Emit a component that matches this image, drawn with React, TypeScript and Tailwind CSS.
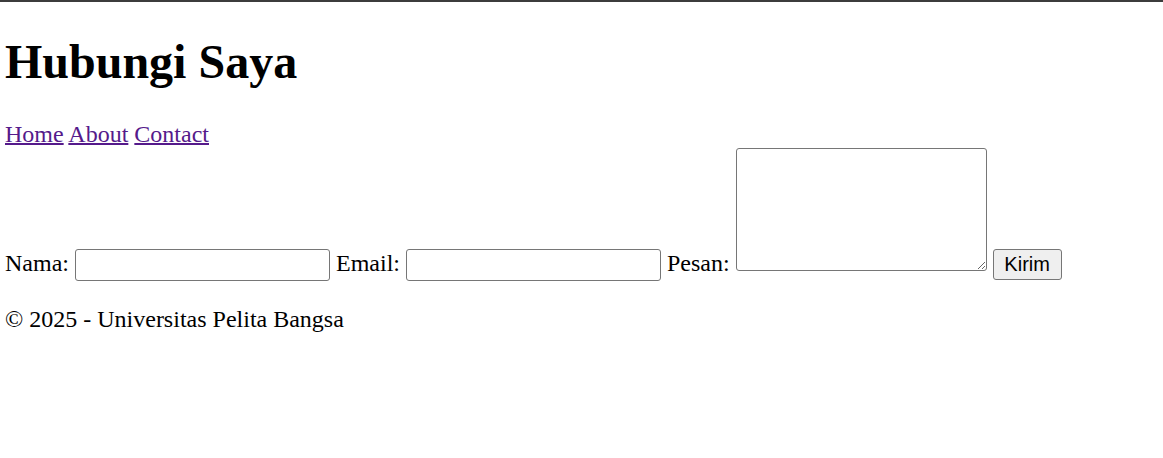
// contact page: plain html look, rendered at the reference's 150% scale.
const ContactPage = () => {
  return (
    <div className="min-h-screen bg-white text-black font-['Liberation_Serif',serif] text-[24px] leading-[28px]">
      {/* thin dark strip along the top edge */}
      <div className="h-[2px] bg-[#3c3c3c]" />

      <div className="px-[5px]">
        <h1 className="mt-[32px] mb-[31px] text-[48px] leading-[55px] font-bold">Hubungi Saya</h1>

        <nav>
          <a href="#" className="text-[#551a8b] underline decoration-2">Home</a>{' '}
          <a href="#" className="text-[#551a8b] underline decoration-2">About</a>{' '}
          <a href="#" className="text-[#551a8b] underline decoration-2">Contact</a>
        </nav>

        <form onSubmit={(e) => e.preventDefault()}>
          <label htmlFor="nama">Nama:</label>{' '}
          <input
            id="nama"
            type="text"
            className="w-[255px] h-[32px] px-[3px] py-[1px] align-baseline bg-white border border-[#767676] rounded-[3px] text-[20px] leading-[23px] font-['Liberation_Sans',Arial,sans-serif]"
          />{' '}
          <label htmlFor="email">Email:</label>{' '}
          <input
            id="email"
            type="email"
            className="w-[255px] h-[32px] px-[3px] py-[1px] align-baseline bg-white border border-[#767676] rounded-[3px] text-[20px] leading-[23px] font-['Liberation_Sans',Arial,sans-serif]"
          />{' '}
          <label htmlFor="pesan">Pesan:</label>{' '}
          <textarea
            id="pesan"
            className="w-[251px] h-[123px] px-[3px] py-[3px] align-baseline bg-white border border-[#767676] rounded-[3px] text-[20px] font-['Liberation_Mono',monospace]"
          />{' '}
          <button
            type="submit"
            className="w-[69px] h-[31px] align-baseline bg-[#efefef] border border-[#767676] rounded-[3px] text-[20px] leading-[23px] text-black font-['Liberation_Sans',Arial,sans-serif]"
          >
            Kirim
          </button>
        </form>

        <footer>
          <p className="mt-[24px]">© 2025 - Universitas Pelita Bangsa</p>
        </footer>
      </div>
    </div>
  );
};

export default ContactPage;
